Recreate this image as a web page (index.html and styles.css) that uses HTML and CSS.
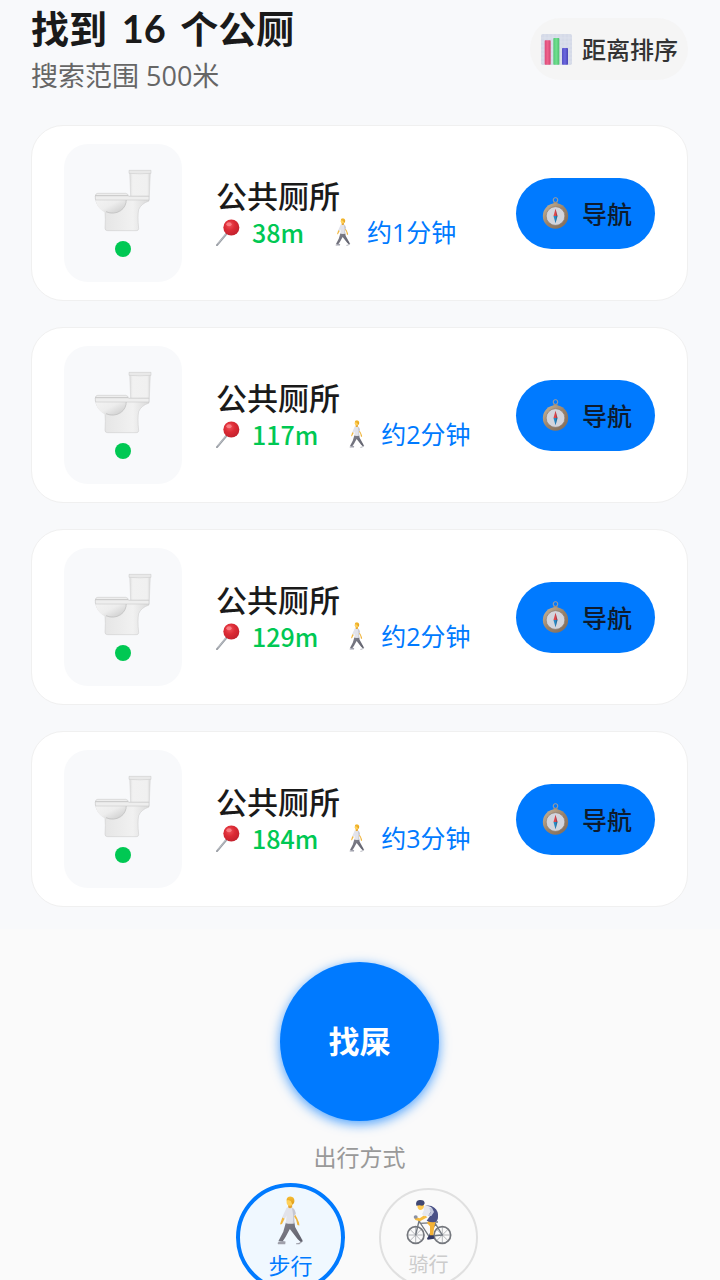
FILE: index.html
```html
<!DOCTYPE html>
<html lang="zh-CN">
<head>
<meta charset="utf-8">
<meta name="viewport" content="width=device-width, initial-scale=1">
<title>找到 16 个公厕</title>
<link rel="stylesheet" href="styles.css">
</head>
<body>
<svg class="defs" aria-hidden="true">
  <defs>
    <linearGradient id="tank" x1="0" x2="1"><stop offset="0" stop-color="#dedede"/><stop offset=".15" stop-color="#f1f1f1"/><stop offset=".85" stop-color="#f0f0f0"/><stop offset="1" stop-color="#d8d8d8"/></linearGradient>
    <linearGradient id="bowl" x1="0" y1="0" x2="1" y2="1"><stop offset="0" stop-color="#f5f5f5"/><stop offset=".5" stop-color="#ededed"/><stop offset="1" stop-color="#c6c6c6"/></linearGradient>
    <linearGradient id="base" x1="0" x2="1"><stop offset="0" stop-color="#cfcfcf"/><stop offset=".2" stop-color="#e6e6e6"/><stop offset=".7" stop-color="#f1f1f1"/><stop offset="1" stop-color="#dadada"/></linearGradient>
    <radialGradient id="pinhead" cx=".4" cy=".35" r=".65"><stop offset="0" stop-color="#f0525a"/><stop offset=".5" stop-color="#dc2b35"/><stop offset="1" stop-color="#c4222e"/></radialGradient>
    <linearGradient id="rim" x1="0" y1="0" x2="1" y2="1"><stop offset="0" stop-color="#c9b79c"/><stop offset=".5" stop-color="#9a8268"/><stop offset="1" stop-color="#7d6a5b"/></linearGradient>
    <linearGradient id="trousers" x1="0" y1="0" x2="1" y2="1"><stop offset="0" stop-color="#85858f"/><stop offset="1" stop-color="#5d5e6a"/></linearGradient>
    <linearGradient id="hair" x1="0" y1="0" x2="0" y2="1"><stop offset="0" stop-color="#f7bd35"/><stop offset="1" stop-color="#dd9a16"/></linearGradient>
    <linearGradient id="red" x1="0" x2="1"><stop offset="0" stop-color="#d94a78"/><stop offset=".5" stop-color="#f0628c"/><stop offset="1" stop-color="#d04370"/></linearGradient>
    <linearGradient id="green" x1="0" x2="1"><stop offset="0" stop-color="#54c777"/><stop offset=".5" stop-color="#70e08f"/><stop offset="1" stop-color="#4fbf70"/></linearGradient>
    <linearGradient id="violet" x1="0" x2="1"><stop offset="0" stop-color="#5650c4"/><stop offset=".5" stop-color="#6c68e0"/><stop offset="1" stop-color="#4a44b4"/></linearGradient>
  </defs>
  <symbol id="i-toilet" viewBox="24 30 174 189">
    <path d="M131 36h62l-3 76h-56z" fill="url(#tank)" stroke="#cfcfcf" stroke-width="1.5"/>
    <path d="M129 34h66v9q-33 3-66 0z" fill="#e9e9e9" stroke="#c9c9c9" stroke-width="1.5"/>
    <path d="M28 112h161v14q-24 8-31 26-4 18 0 57 0 6-7 6H65q-8 0-8-7 2-28 0-50-24-12-29-39z" fill="url(#base)" stroke="#c8c8c8" stroke-width="1.5"/>
    <path d="M27 113h94q2 46-45 50-44-2-49-50z" fill="url(#bowl)"/>
    <path d="M60 158q24 10 44-3 17-12 17-35" fill="none" stroke="#b9b9b9" stroke-width="2"/>
    <path d="M28 112q0-9 7-9h84q8 1 9 9h61v11H29z" fill="#eeeeee" stroke="#c3c3c3" stroke-width="1.5"/>
    <path d="M28 110h98" stroke="#b4b4b4" stroke-width="2"/>
  </symbol>
  <symbol id="i-pin" viewBox="0 0 72 80">
    <path d="M37 37 3 78" stroke="#9b9fa6" stroke-width="6" stroke-linecap="round"/>
    <path d="M36 37 5 74" stroke="#c9cdd3" stroke-width="2"/>
    <circle cx="46" cy="25" r="24" fill="url(#pinhead)"/>
    <ellipse cx="39" cy="15" rx="8" ry="6" fill="#ff9297" opacity=".7"/>
  </symbol>
  <symbol id="i-walk" viewBox="164 78 82 148">
    <path d="M218 132q8 12 13 27l1 8-6-1-4-17-9-12z" fill="#f0b53d"/>
    <path d="M191 158h26l2 14 19 34 4 9-5 3-10-9-24-31-13 24-9 14-13-1 15-29z" fill="url(#trousers)"/>
    <path d="m181 214-14 4-1 4 1 2h22l1-8zM240 210l2 5-13 5-7 1 0 3h10l10-8 1-5z" fill="#9fa0ab"/>
    <path d="M193 113q10-6 20 0 5 4 8 19l-5 8 1 20q-12 4-26 0l2-23-6 12-8-5z" fill="#e2e3ea"/>
    <path d="M209 114q6 19 3 45l5 1-1-23 5-6q-3-16-12-17z" fill="#c5c7d2"/>
    <path d="m180 143 7 4-7 14-5 4-1-4z" fill="#f2b840"/>
    <path d="M198 101h12v11q-7 6-12 0z" fill="#e5a533"/>
    <ellipse cx="203" cy="95" rx="10" ry="12" fill="#ffd15a"/>
    <path d="M193 91q0-12 12-12 12 1 12 14 0 8-6 11l-5-11-8-3z" fill="url(#hair)"/>
  </symbol>
  <symbol id="i-compass" viewBox="0 0 78 96">
    <circle cx="39" cy="9" r="7" fill="none" stroke="#a99f96" stroke-width="3"/>
    <path d="M33 15h12v8H33z" fill="#a18f7b"/>
    <circle cx="39" cy="57" r="38" fill="url(#rim)"/>
    <circle cx="39" cy="57" r="28" fill="#d3d5dd" stroke="#8b7d74" stroke-width="2"/>
    <path d="m39 35 6 22H33z" fill="#e0464c"/>
    <path d="m39 79 6-22H33z" fill="#2789c4"/>
    <path d="m39 36 2 21-2 22 6-22z" fill="#24364f" opacity=".35"/>
  </symbol>
  <symbol id="i-chart" viewBox="0 0 93 93">
    <rect width="93" height="93" rx="5" fill="#d5dae8"/>
    <path d="M12 0v93M24 0v93M36 0v93M48 0v93M60 0v93M72 0v93M84 0v93M0 12h93M0 24h93M0 36h93M0 48h93M0 60h93M0 72h93M0 84h93" stroke="#dfe4ef" stroke-width="2"/>
    <rect x="11" y="19" width="18" height="73" rx="2" fill="url(#red)"/>
    <rect x="37" y="12" width="18" height="80" rx="2" fill="url(#green)"/>
    <rect x="63" y="42" width="18" height="50" rx="2" fill="url(#violet)"/>
  </symbol>
  <symbol id="i-bike" viewBox="122 88 138 136">
    <g fill="none" stroke="#92959b" stroke-width="2">
      <path d="M151 170v50M126 195h50M133 177l36 36M169 177l-36 36M231 170v50M206 195h50M213 177l36 36M249 177l-36 36"/>
    </g>
    <g fill="none" stroke="#74777d" stroke-width="5"><circle cx="151" cy="195" r="25"/><circle cx="231" cy="195" r="25"/></g>
    <path d="m151 195 10-42 30 46 19-38 21 34-40 4M163 160l43-2M158 147l6 10M203 156h15" fill="none" stroke="#71777f" stroke-width="4" stroke-linejoin="round"/>
    <path d="m192 150 20-2-6 27-3 25-9-1 0-30-9-10z" fill="#f4b236"/>
    <path d="m192 196 13 0 2 10-20 3-2-4z" fill="#343a64"/>
    <path d="m178 135-15 10-10-3-6 3 3 5 14 4 22-12z" fill="#f6bc40"/>
    <path d="M180 107q17-3 27 6 13 10 11 28 0 11-8 15-14 2-26-4l10-14-6-8 4-16z" fill="#4a5187"/>
    <path d="M172 110q14-6 26 2 2 12-6 20-8 6-14 7l-8-6 6-13z" fill="#e5e7ef"/>
    <path d="m192 114 4 14-10 10 12 0 8-12-6-13z" fill="#c3c8dc"/>
    <path d="M156 104q0 14 8 16 10 0 12-12v-8z" fill="#ffc951"/>
    <path d="M153 107q-4-15 10-17 15-1 15 10-1 6-7 7-9-3-18 0z" fill="#404873"/>
    <ellipse cx="151" cy="141" rx="6" ry="5" fill="#8a90a4"/>
  </symbol>
</svg>

<main class="results">
  <header class="header">
    <div class="heading">
      <h1 class="title">找到 <span class="count">16</span> 个公厕</h1>
      <p class="subtitle">搜索范围 500米</p>
    </div>
    <button class="sort" type="button"><svg class="icon-chart" aria-hidden="true"><use href="#i-chart"/></svg>距离排序</button>
  </header>

  <ul class="list">
    <li class="card">
      <div class="tile"><svg class="icon-toilet" aria-hidden="true"><use href="#i-toilet"/></svg><span class="dot"></span></div>
      <div class="info">
        <h2 class="name">公共厕所</h2>
        <p class="meta"><svg class="icon-pin" aria-hidden="true"><use href="#i-pin"/></svg><span class="distance">38m</span><svg class="icon-walk" aria-hidden="true"><use href="#i-walk"/></svg><span class="time">约1分钟</span></p>
      </div>
      <button class="go" type="button"><svg class="icon-compass" aria-hidden="true"><use href="#i-compass"/></svg>导航</button>
    </li>
    <li class="card">
      <div class="tile"><svg class="icon-toilet" aria-hidden="true"><use href="#i-toilet"/></svg><span class="dot"></span></div>
      <div class="info">
        <h2 class="name">公共厕所</h2>
        <p class="meta"><svg class="icon-pin" aria-hidden="true"><use href="#i-pin"/></svg><span class="distance">117m</span><svg class="icon-walk" aria-hidden="true"><use href="#i-walk"/></svg><span class="time">约2分钟</span></p>
      </div>
      <button class="go" type="button"><svg class="icon-compass" aria-hidden="true"><use href="#i-compass"/></svg>导航</button>
    </li>
    <li class="card">
      <div class="tile"><svg class="icon-toilet" aria-hidden="true"><use href="#i-toilet"/></svg><span class="dot"></span></div>
      <div class="info">
        <h2 class="name">公共厕所</h2>
        <p class="meta"><svg class="icon-pin" aria-hidden="true"><use href="#i-pin"/></svg><span class="distance">129m</span><svg class="icon-walk" aria-hidden="true"><use href="#i-walk"/></svg><span class="time">约2分钟</span></p>
      </div>
      <button class="go" type="button"><svg class="icon-compass" aria-hidden="true"><use href="#i-compass"/></svg>导航</button>
    </li>
    <li class="card">
      <div class="tile"><svg class="icon-toilet" aria-hidden="true"><use href="#i-toilet"/></svg><span class="dot"></span></div>
      <div class="info">
        <h2 class="name">公共厕所</h2>
        <p class="meta"><svg class="icon-pin" aria-hidden="true"><use href="#i-pin"/></svg><span class="distance">184m</span><svg class="icon-walk" aria-hidden="true"><use href="#i-walk"/></svg><span class="time">约3分钟</span></p>
      </div>
      <button class="go" type="button"><svg class="icon-compass" aria-hidden="true"><use href="#i-compass"/></svg>导航</button>
    </li>
  </ul>
</main>

<footer class="panel">
  <button class="find" type="button">找屎</button>
  <p class="caption" id="mode-label">出行方式</p>
  <div class="modes" role="group" aria-labelledby="mode-label">
    <button class="mode mode-active" type="button" aria-pressed="true"><svg class="icon-walk-large" aria-hidden="true"><use href="#i-walk"/></svg>步行</button>
    <button class="mode" type="button" aria-pressed="false"><svg class="icon-bike" aria-hidden="true"><use href="#i-bike"/></svg>骑行</button>
  </div>
</footer>
</body>
</html>
```
FILE: styles.css
```css
* {
  box-sizing: border-box;
}

body {
  margin: 0;
  height: 100vh;
  overflow: hidden;
  background: #fafafa;
  color: #1a1a1a;
  font-family: "Noto Sans CJK SC", sans-serif;
}

h1, h2, p, ul {
  margin: 0;
  padding: 0;
}

button {
  margin: 0;
  padding: 0;
  border: 0;
  font: inherit;
  color: inherit;
  cursor: pointer;
}

svg {
  display: block;
  flex: none;
}

.defs {
  position: absolute;
  width: 0;
  height: 0;
}

.results {
  padding: 4px 32px 22px 31px;
  background: #f8f9fb;
}

.header {
  display: flex;
  align-items: center;
  justify-content: space-between;
  margin-bottom: 31px;
}

.title {
  font-size: 38px;
  line-height: 46px;
  font-weight: 700;
}

.count {
  margin: 0 6px;
  font-family: Lato, sans-serif;
}

.subtitle {
  margin-top: 7px;
  font-family: "Open Sans", "Noto Sans CJK SC", sans-serif;
  font-size: 27px;
  line-height: 36px;
  color: #666;
}

.sort {
  display: flex;
  align-items: center;
  gap: 10px;
  padding: 0 10px 0 11px;
  height: 62px;
  border-radius: 31px;
  background: #f5f5f5;
  color: #333;
  font-size: 24px;
  line-height: 34px;
  font-weight: 500;
}

.icon-chart {
  width: 31px;
  height: 31px;
}

.list {
  display: flex;
  flex-direction: column;
  gap: 26px;
  list-style: none;
}

.card {
  display: flex;
  align-items: center;
  padding: 18px 32px;
  border: 1px solid #f0f0f0;
  border-radius: 32px;
  background: #fff;
}

.tile {
  display: flex;
  flex: none;
  flex-direction: column;
  align-items: center;
  justify-content: center;
  gap: 9px;
  width: 118px;
  height: 138px;
  border-radius: 24px;
  background: #f8f9fb;
}

.icon-toilet {
  width: 58px;
  height: 63px;
}

.dot {
  width: 16px;
  height: 16px;
  border-radius: 50%;
  background: #00c853;
}

.info {
  flex: 1;
  margin-left: 34px;
}

.name {
  font-family: "Liberation Sans", "Noto Sans CJK SC", sans-serif;
  font-size: 31px;
  line-height: 38px;
  font-weight: 500;
}

.meta {
  display: flex;
  align-items: center;
  font-size: 25px;
  line-height: 30px;
}

.icon-pin {
  width: 24px;
  height: 27px;
  margin-right: 12px;
}

.distance {
  color: #00c853;
  font-weight: 500;
}

.icon-walk {
  width: 16px;
  height: 28px;
  margin: 0 16px 0 31px;
}

.time {
  font-family: "Open Sans", "Noto Sans CJK SC", sans-serif;
  color: #007aff;
}

.go {
  display: flex;
  align-items: center;
  gap: 11px;
  padding: 0 23px 0 24px;
  height: 71px;
  border-radius: 36px;
  background: #007aff;
  color: #0d1b2e;
  font-size: 25px;
  line-height: 34px;
  font-weight: 500;
}

.icon-compass {
  width: 31px;
  height: 32px;
}

.panel {
  display: flex;
  flex-direction: column;
  align-items: center;
  padding: 33px 1px 0 0;
}

.find {
  width: 159px;
  height: 159px;
  padding-bottom: 4px;
  border-radius: 50%;
  background: #007aff;
  color: #fff;
  font-size: 31px;
  font-weight: 700;
  box-shadow: 0 3px 12px rgba(0, 122, 255, 0.7);
}

.caption {
  margin: 19px 0 11px;
  font-size: 23px;
  line-height: 32px;
  color: #999;
}

.modes {
  display: grid;
  grid-template-columns: 138px 138px;
  place-items: center;
}

.mode {
  display: flex;
  flex-direction: column;
  align-items: center;
  gap: 5px;
  width: 99px;
  height: 99px;
  padding-top: 9px;
  border: 2px solid #e0e0e0;
  border-radius: 50%;
  background: #fafafa;
  color: #ccc;
  font-size: 20px;
  line-height: 28px;
}

.mode-active {
  width: 109px;
  height: 109px;
  border: 4px solid #007aff;
  background: #f0f8ff;
  color: #007aff;
  font-size: 22px;
}

.icon-walk-large {
  width: 27px;
  height: 49px;
}

.icon-bike {
  width: 46px;
  height: 46px;
}
```
